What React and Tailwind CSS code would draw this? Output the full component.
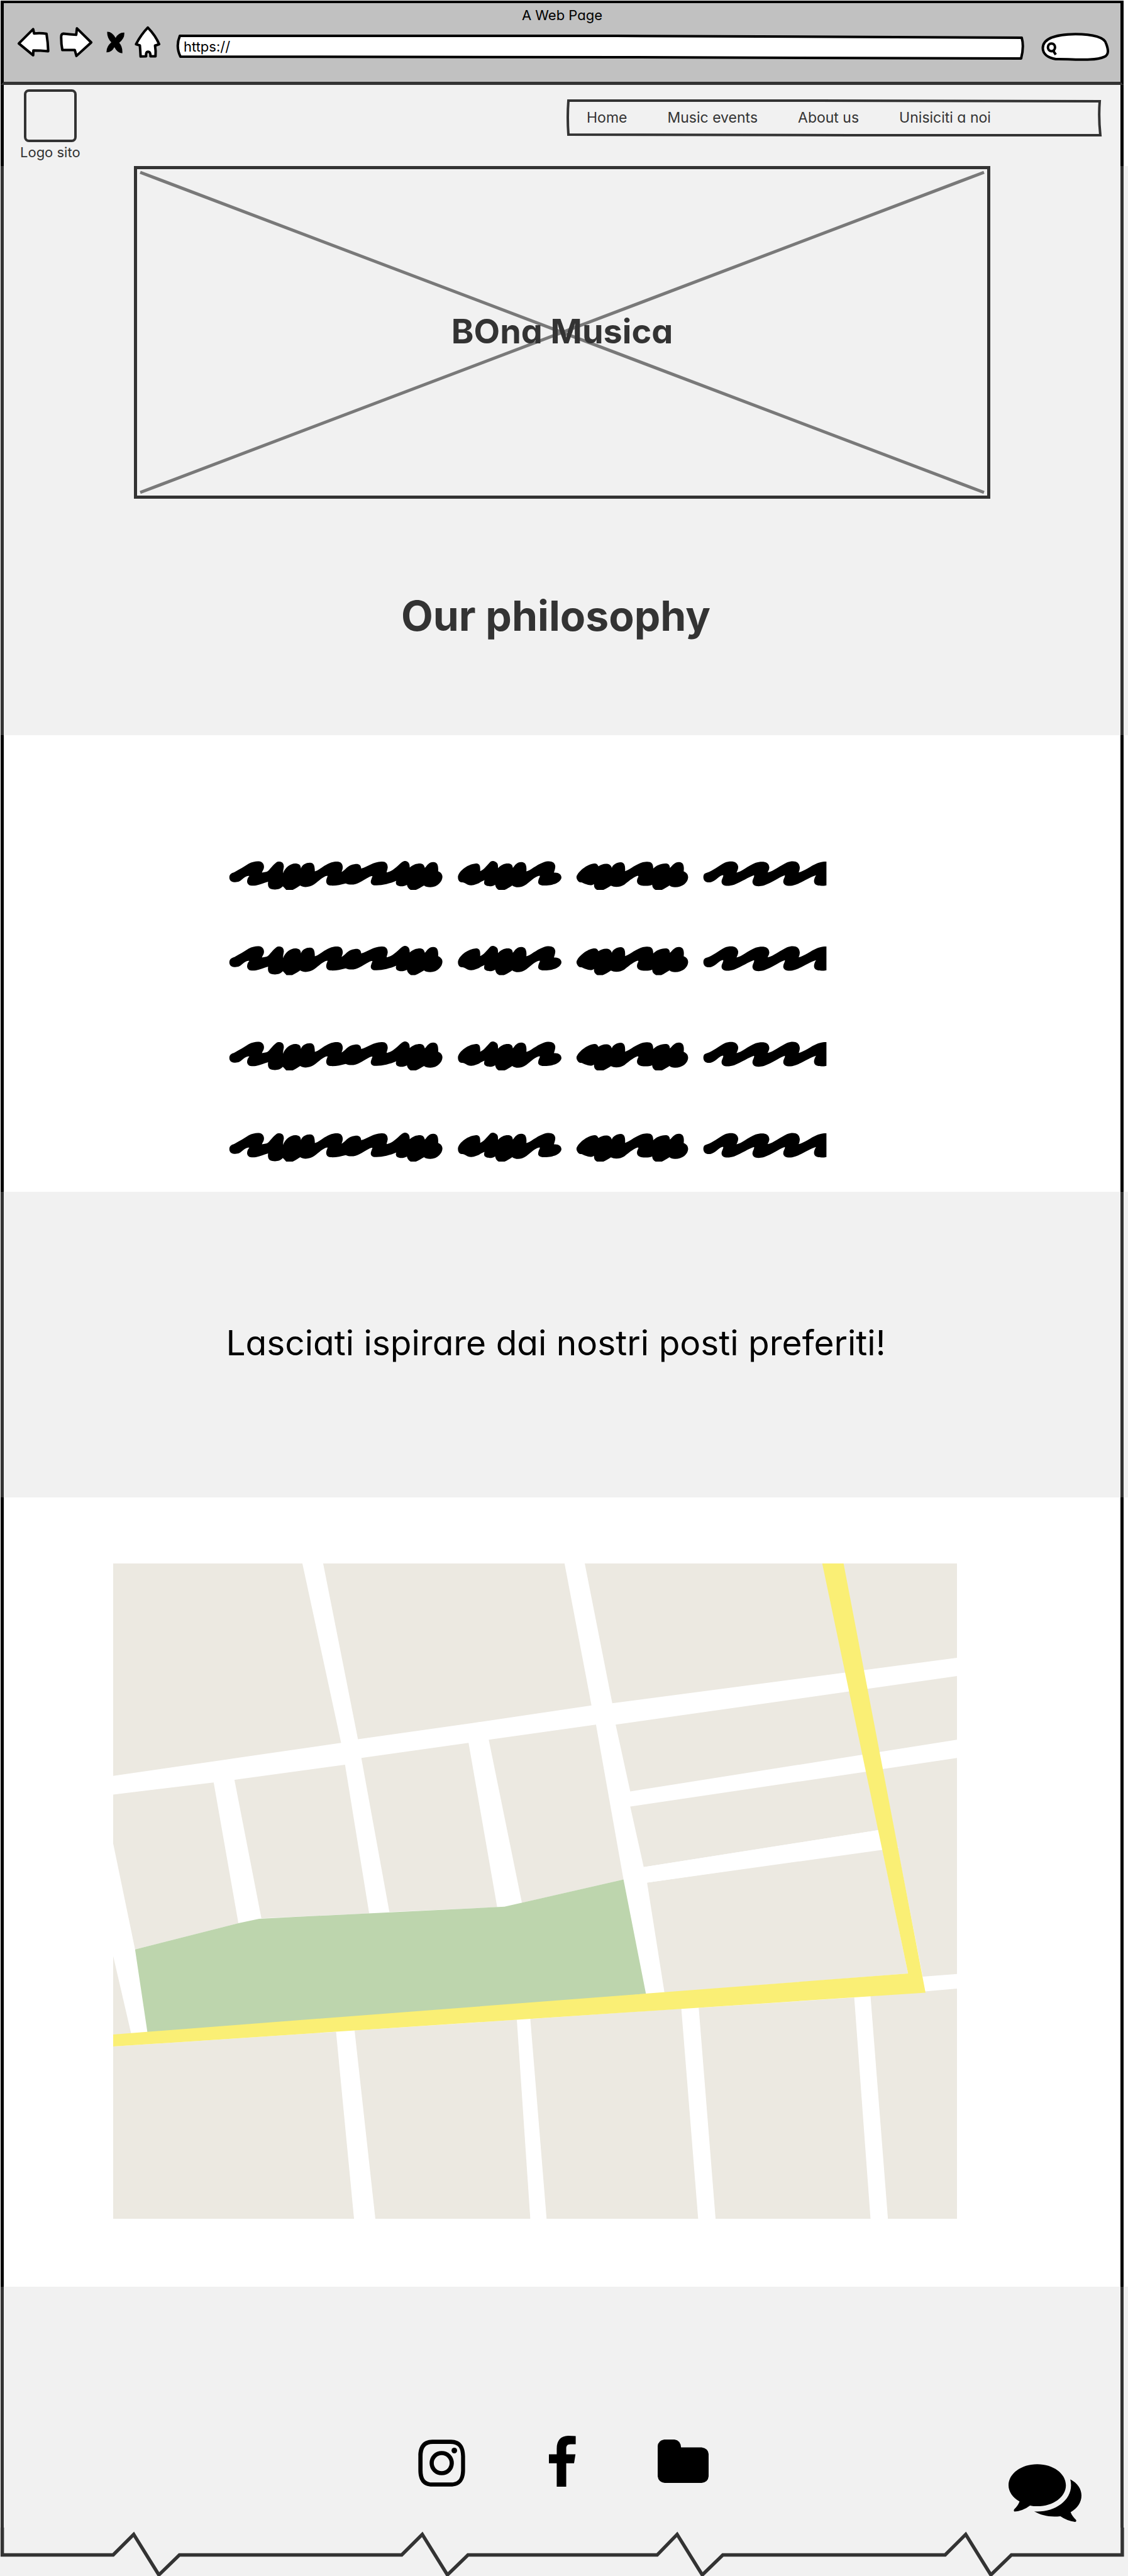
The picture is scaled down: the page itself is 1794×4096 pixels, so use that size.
import React from 'react';

const FONT = 'font-[Inter,"Liberation_Sans",sans-serif] [font-feature-settings:"cv11"]';

function Shape({ box, className, children }) {
  return (
    <svg viewBox={box} preserveAspectRatio="none" className={className} aria-hidden="true">
      {children}
    </svg>
  );
}

/* Full-width band with the browser frame's side borders drawn inside it. */
function Band({ outer, inner, children }) {
  return (
    <div className={`w-full pl-px pr-[7px] ${outer}`}>
      <div className={`border-x-[5px] ${inner}`}>{children}</div>
    </div>
  );
}

const arrow = 'fill-white stroke-black [stroke-linejoin:round] [vector-effect:non-scaling-stroke]';

function BrowserBar() {
  return (
    <header className="w-full bg-white pt-px">
      <div className="ml-px mr-[7px] border-x-[5px] border-t-4 border-b-[5px] border-x-black border-t-black border-b-[#333333] bg-[#c1c1c1] pt-[5px] pb-8">
        <h1 className="text-center text-[22px] leading-7 text-black">A Web Page</h1>
        <div className="mt-1 flex items-start pl-[22px] pr-[17px]">
          <div className="flex h-[50px] items-center">
            <button type="button" aria-label="Back" className="mr-4">
              <Shape box="75 143 132 150" className="block h-[46px] w-[51px] overflow-visible">
                <path strokeWidth="4" className={arrow} d="M80 225 L139 151 L143 173 Q172 170 194 175 Q200 220 201 265 Q168 261 140 261 L139 286 Z" />
              </Shape>
            </button>
            <button type="button" aria-label="Forward" className="mr-[22px]">
              <Shape box="250 143 137 159" className="block h-12 w-[52px] overflow-visible">
                <path strokeWidth="4" className={arrow} d="M382 224 L322 150 L319 184 Q290 182 265 178 Q255 180 256 198 Q256 235 261 264 Q290 263 313 264 L320 295 Z" />
              </Shape>
            </button>
            <button type="button" aria-label="Stop" className="mr-4">
              <Shape box="446 155 76 115" className="block h-[35px] w-[29px]">
                <path d="M450 157 Q470 156 485 189 Q497 160 521 161 Q524 190 500 214 Q515 235 513 269 Q492 268 480 237 Q468 265 447 264 Q446 235 467 212 Q448 187 450 157Z" />
              </Shape>
            </button>
            <button type="button" aria-label="Home">
              <Shape box="563 138 107 164" className="block h-[50px] w-[41px] overflow-visible">
                <path strokeWidth="4" className={arrow} d="M618 144 Q650 185 665 231 L648 238 Q652 268 650 294 L629 294 Q630 270 619 270 Q609 270 611 294 L588 295 Q587 265 585 237 L569 231 Q590 180 618 144Z" />
              </Shape>
            </button>
          </div>
          <div className="relative mt-3 ml-[25px] h-10 flex-1">
            <Shape box="0 0 1350 40" className="absolute inset-0 size-full overflow-visible">
              <path strokeWidth="4" className={arrow} d="M6 3 L700 3 L1346 6 Q1350 20 1345 39 L700 37 L7 36 Q-1 20 6 3Z" />
            </Shape>
            <input aria-label="Address" defaultValue="https://" className="relative block h-10 w-full bg-transparent px-3 text-[22px] leading-7 text-black outline-none" />
          </div>
          <div className="relative mt-2.5 ml-[27px] h-[46px] w-[109px]">
            <Shape box="1348 170 174 150" className="absolute inset-0 size-full overflow-visible">
              <path strokeWidth="4" className={arrow} d="M1352 250 C1352 200 1385 178 1435 177 C1480 177 1510 195 1513 228 C1518 255 1521 285 1508 295 C1480 320 1430 305 1385 307 C1365 300 1352 280 1352 250Z" />
              <ellipse cx="1374" cy="246" rx="9" ry="20" strokeWidth="4" className={arrow} />
              <path strokeWidth="4" className={arrow} d="M1379 266 L1385 284" />
            </Shape>
            <input aria-label="Search" className="relative block h-full w-full bg-transparent pr-4 pl-8 text-[22px] outline-none" />
          </div>
        </div>
      </div>
    </header>
  );
}

const NAV = ['Home', 'Music events', 'About us', 'Unisiciti a noi'];

function TopRow() {
  return (
    <div className="flex h-[129px] items-start justify-between pr-[31px] pl-[26px] text-[#333333]">
      <a href="#home" className="flex flex-col items-center pt-[7px]">
        <span className="block size-[84px] rounded-lg border-4 border-[#333333]" />
        <span className="text-[22px] leading-8">Logo sito</span>
      </a>
      <nav className="relative mt-[23px] w-[850px]">
        <Shape box="0 0 850 57" className="absolute inset-0 size-full overflow-visible">
          <path strokeWidth="4" className="fill-none stroke-[#333333] [vector-effect:non-scaling-stroke]" d="M3 2 L400 2 L848 3 Q846 28 849 56 L450 56 L3 55 Q1 28 3 2Z" />
        </Shape>
        <ul className="relative flex h-[58px] items-center gap-16 pl-8 text-[23px] leading-7">
          {NAV.map((n) => (
            <li key={n}><a href="#home">{n}</a></li>
          ))}
        </ul>
      </nav>
    </div>
  );
}

function Scribble({ className }) {
  return (
    <svg viewBox="0 0 1046 51" className={`block w-full max-w-[951px] ${className}`} aria-hidden="true">
      <g transform="scale(.35714 .37) translate(-58 -72)">
        <path d="M60 150 C60 135 70 130 85 125 C110 112 135 98 155 85 C175 74 195 72 210 74 C228 79 233 95 228 110 C225 118 220 123 220 127 C232 125 243 125 250 119 C265 105 280 82 298 75 C315 73 328 80 327 100 C325 110 323 120 323 130 C333 103 360 84 382 84 C400 84 410 90 411 108 C415 90 435 80 455 80 C473 80 479 93 479 121 C500 117 520 93 560 79 C580 73 595 74 603 78 C615 85 618 100 614 112 C612 118 610 122 611 124 C625 118 640 90 675 87 C692 84 705 90 706 108 C740 98 765 76 805 75 C825 73 836 83 836 103 C834 115 830 122 831 126 C860 122 880 98 905 78 C915 70 925 70 935 77 C944 85 943 95 944 103 C960 90 975 84 995 84 C1010 84 1015 95 1018 105 C1030 90 1040 76 1060 77 C1078 78 1085 90 1083 120 C1098 127 1104 135 1104 148 C1103 170 1080 196 1045 196 C1030 196 1020 194 1014 188 C1000 195 985 206 970 210 L950 210 C937 202 932 195 930 185 C910 196 880 193 877 180 C875 175 876 170 878 166 C845 180 800 190 770 187 C752 184 750 170 756 158 C758 150 763 145 760 143 C745 144 725 160 700 172 C675 186 650 187 630 178 C605 184 580 190 555 188 C535 187 532 170 536 158 C538 150 543 145 540 142 C520 145 500 165 475 183 C455 196 425 200 407 188 C395 196 385 202 368 210 L340 210 C332 203 328 197 322 192 C310 206 290 209 270 206 C252 203 247 190 250 170 C230 176 210 184 190 188 C165 191 150 188 147 170 C147 160 150 150 158 143 C140 140 125 160 108 169 C95 175 60 176 60 150Z" />
        <path d="M1180 150 C1178 128 1220 88 1268 84 C1285 84 1290 92 1289 120 C1305 115 1320 95 1340 75 C1348 71 1355 71 1362 75 C1376 82 1377 90 1376 106 C1390 92 1405 84 1425 84 C1440 84 1447 90 1449 105 C1460 90 1470 76 1492 77 C1512 78 1518 95 1515 121 C1535 118 1560 92 1600 78 C1630 68 1656 75 1657 98 C1656 112 1652 120 1650 127 C1672 125 1687 135 1687 150 C1685 175 1640 190 1600 188 C1580 188 1572 180 1573 170 C1574 155 1585 145 1580 142 C1560 145 1545 160 1515 183 C1490 200 1462 200 1446 188 C1430 198 1418 206 1405 210 L1382 210 C1368 203 1365 195 1362 184 C1345 196 1315 193 1309 180 C1307 174 1309 168 1310 163 C1290 172 1270 185 1245 187 C1222 187 1215 172 1200 173 C1190 174 1180 165 1180 150Z" />
      </g>
      <g transform="translate(499.3 0) scale(.37) translate(0 -72)">
        <path d="M294 150 C294 128 345 84 380 84 C390 84 394 90 398 97 C415 84 455 76 461 105 C465 90 485 78 503 78 C522 79 525 95 524 120 C545 115 570 90 605 79 C640 72 657 75 657 108 C670 95 690 84 715 84 C730 84 735 92 736 105 C750 90 760 76 780 77 C800 79 804 95 801 121 C815 127 822 135 822 150 C820 175 795 196 760 196 C748 196 740 194 734 188 C720 196 708 205 695 210 L670 210 C658 203 653 197 652 184 C635 192 615 190 600 188 C582 184 578 172 581 160 C583 150 590 145 585 142 C570 145 550 160 520 184 C500 196 475 198 457 189 C440 200 430 206 418 210 L393 210 C380 203 376 195 377 181 C365 190 350 186 340 182 C325 177 320 172 312 173 C305 173 295 160 294 150Z" />
        <path d="M894 150 C894 135 900 130 912 127 C940 118 965 95 995 80 C1025 70 1055 72 1059 100 C1059 112 1053 120 1051 127 C1075 123 1105 95 1140 81 C1170 72 1204 72 1206 103 C1205 115 1200 120 1198 126 C1225 122 1260 92 1290 79 C1320 68 1348 73 1350 103 C1350 113 1347 120 1345 126 C1370 122 1400 96 1435 82 C1450 76 1460 75 1476 75 L1476 187 C1460 191 1440 190 1430 186 C1412 180 1415 158 1427 140 C1400 147 1370 170 1330 184 C1300 195 1275 190 1272 172 C1270 158 1283 145 1279 140 C1250 150 1220 175 1180 188 C1150 195 1127 192 1126 170 C1126 158 1138 145 1133 140 C1110 148 1075 170 1040 184 C1010 193 980 192 980 170 C980 158 992 143 987 139 C970 140 955 165 930 172 C910 177 895 168 894 150Z" />
      </g>
    </svg>
  );
}

function CityMap() {
  return (
    <svg viewBox="18 46 1503 1472" preserveAspectRatio="none" role="img" aria-label="Map" className="block h-[1042px] w-full max-w-[1342px] bg-white">
      <g fill="#ece9e1">
        <path d="M18 46 L355 46 L424 449 L210 488 L18 523Z" />
        <path d="M392 46 L822 46 L870 365 L660 404 L454 441Z" />
        <path d="M858 46 L1521 46 L1521 258 L907 360Z" />
        <path d="M18 565 L197 538 L241 854 L57 913 L18 675Z" />
        <path d="M234 532 L431 498 L474 832 L282 843Z" />
        <path d="M460 483 L651 449 L702 818 L510 829Z" />
        <path d="M687 442 L878 408 L927 756 L746 808Z" />
        <path d="M913 408 L1521 299 L1521 442 L939 558Z" />
        <path d="M939 592 L1400 506 L1400 641 L963 728Z" />
        <path d="M969 763 L1388 687 L1434 967 L1000 1010Z" />
        <path d="M1388 508 L1521 483 L1521 968 L1460 974Z" />
        <path d="M18 928 L50 1102 L18 1106Z" />
        <path d="M18 1131 L415 1098 L447 1518 L18 1518Z" />
        <path d="M448 1095 L737 1071 L761 1518 L485 1518Z" />
        <path d="M761 1069 L1030 1046 L1060 1518 L790 1518Z" />
        <path d="M1061 1044 L1338 1021 L1367 1518 L1091 1518Z" />
        <path d="M1367 1018 L1521 1001 L1521 1518 L1398 1518Z" />
      </g>
      <path fill="#ffffff" d="M963 728 L1381 645 L1417 684 L969 763Z" />
      <path fill="#bdd5ad" d="M57 913 L241 854 L278 844 L715 817 L927 756 L967 1013 L500 1060 L79 1099Z" />
      <path fill="#faef75" d="M1281 46 L1319 46 L1465 1010 L18 1131 L18 1104 L1434 967Z" />
    </svg>
  );
}

function Footer() {
  return (
    <div className="flex items-start pt-[237px] pb-[9px] pl-[659px] pr-[62px]">
      <div className="flex h-[81px] items-center">
        <a href="#instagram" aria-label="Instagram" className="mr-[133px] self-end">
          <Shape box="127 202 202 248" className="block h-[75px] w-[75px]">
            <path fillRule="evenodd" d="M188 203 H268 C310 203 328 240 328 290 V362 C328 415 310 449 265 449 H188 C145 449 128 415 128 362 V288 C128 240 145 203 188 203Z M190 225 C158 225 146 248 146 290 V362 C146 408 158 428 190 428 H265 C299 428 310 408 311 362 V290 C310 245 299 225 265 225Z" />
            <path fillRule="evenodd" d="M228 262 A52 64 0 1 1 228 390 A52 64 0 1 1 228 262Z M228 284 A34 42 0 1 0 228 368 A34 42 0 1 0 228 284Z" />
            <ellipse cx="282" cy="260" rx="12" ry="15" />
          </Shape>
        </a>
        <a href="#facebook" aria-label="Facebook" className="mr-[130px]">
          <Shape box="689 182 114 268" className="block h-[81px] w-[43px]">
            <path d="M722 450 V327 H689 V280 H722 V250 C722 205 740 183 770 182 Q788 182 802 184 V227 H780 C766 227 762 236 762 250 V280 H801 L795 327 H762 V450Z" />
          </Shape>
        </a>
        <a href="#files" aria-label="Files">
          <Shape box="1154 202 218 228" className="block h-[69px] w-[81px]">
            <path d="M1154 237 Q1156 207 1182 202 H1226 Q1252 207 1254 243 H1342 Q1370 248 1372 278 V395 Q1370 425 1342 430 H1184 Q1157 425 1154 395Z" />
          </Shape>
        </a>
      </div>
      <button type="button" aria-label="Chat" className="mt-[45px] ml-auto">
        <Shape box="372 330 384 303" className="block h-[92px] w-[116px]">
          <path d="M523 331 C607 331 674 380 674 441 C674 502 607 551 523 551 Q503 551 485 547 Q450 574 404 579 Q398 577 401 568 Q422 548 430 526 C393 505 372 473 372 441 C372 380 440 331 523 331Z" />
          <path d="M697 410 C735 430 756 460 756 495 C756 530 735 562 699 582 Q706 602 728 623 Q730 632 722 633 Q680 627 645 603 C595 610 545 600 507 578 C610 585 701 525 701 441 Q701 425 697 410Z" />
        </Shape>
      </button>
    </div>
  );
}

export default function App() {
  return (
    <div className={`w-full bg-[#f1f1f1] text-black ${FONT}`}>
      <BrowserBar />
      <Band outer="bg-white" inner="border-black bg-[#f1f1f1]">
        <TopRow />
      </Band>

      <Band outer="bg-[#f1f1f1]" inner="border-[#333333]">
        <div className="relative mx-auto flex h-[529px] w-full max-w-[1362px] items-center justify-center border-[5px] border-[#333333]">
          <Shape box="0 0 1352 521" className="absolute inset-0 size-full">
            <path strokeWidth="5" className="fill-none stroke-[#797979]" d="M5 5 L1347 516 M5 516 L1347 5" />
          </Shape>
          <h2 className="relative pb-1 text-[54px] leading-[72px] font-bold text-[#333333]">BOna Musica</h2>
        </div>
        <h2 className="pt-36 pr-5 pb-[148px] text-center text-[66px] leading-[84px] font-bold text-[#333333]">Our philosophy</h2>
      </Band>

      <Band outer="bg-white" inner="border-black">
        <div className="pt-[200px] pb-12 pl-[358px]">
          <Scribble className="mb-[89px]" />
          <Scribble className="mb-[105px]" />
          <Scribble className="mb-[99px]" />
          <Scribble className="" />
        </div>
      </Band>

      <Band outer="bg-[#f1f1f1]" inner="border-[#333333]">
        <p className="pt-[200px] pr-5 pb-[206px] text-center text-[55px] leading-20">Lasciati ispirare dai nostri posti preferiti!</p>
      </Band>

      <Band outer="bg-white" inner="border-black">
        <div className="pt-[105px] pb-[108px] pl-[174px]">
          <CityMap />
        </div>
      </Band>

      <Band outer="bg-[#f1f1f1]" inner="border-[#333333]">
        <Footer />
      </Band>
      <svg viewBox="0 0 1974 86" preserveAspectRatio="none" className="block h-[78px] w-full fill-none stroke-[#333333]" strokeWidth="6" aria-hidden="true">
        <path d="M4 0 V48 H198 L234 12 L278 83 L314 48 H703 L739 12 L783 83 L819 48 H1150 L1185 12 L1229 83 L1265 48 H1654 L1690 12 L1734 83 L1770 48 H1964 V0" />
      </svg>
    </div>
  );
}
